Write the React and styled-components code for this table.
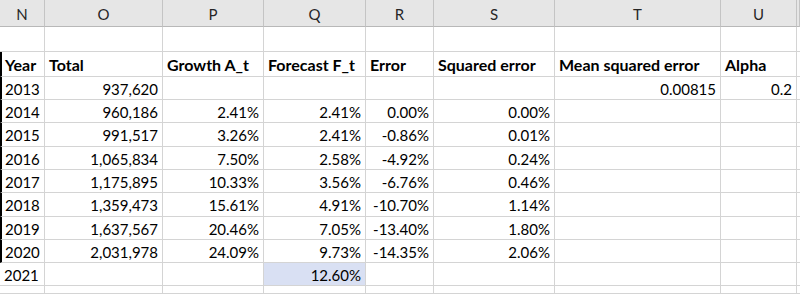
import React from "react";
import styled, { createGlobalStyle } from "styled-components";

const GlobalStyle = createGlobalStyle`
  html, body {
    margin: 0;
    padding: 0;
    background: #ffffff;
  }
  body {
    font-family: "Lato", "Open Sans", "Liberation Sans", sans-serif;
    -webkit-font-smoothing: antialiased;
  }
`;

const COLUMNS = ["N", "O", "P", "Q", "R", "S", "T", "U", ""];
const WIDTHS = [45, 118, 101, 102, 68, 121, 166, 76, 3];
const ROW_HEIGHTS = [25, 25, 23, 23, 24, 23, 23, 24, 23, 23, 23, 8];

const Sheet = styled.div`
  display: grid;
  grid-template-columns: ${WIDTHS.map((w) => `${w}px`).join(" ")};
  grid-template-rows: 27px ${ROW_HEIGHTS.map((h) => `${h}px`).join(" ")};
  width: 800px;
  height: 294px;
  overflow: hidden;
  background: #ffffff;
`;

const ColHead = styled.div`
  box-sizing: border-box;
  display: flex;
  align-items: center;
  justify-content: center;
  background: #e6e6e6;
  border-right: 1px solid #c4c4c4;
  border-bottom: 1px solid #b8b8b8;
  color: #262626;
  font-size: 15px;
  padding-top: 1px;
`;

const Cell = styled.div`
  box-sizing: border-box;
  display: flex;
  align-items: center;
  justify-content: ${(p) => (p.$align === "right" ? "flex-end" : "flex-start")};
  padding: 1px 4px 0 ${(p) => (p.$edge ? "3px" : "4px")};
  border-right: 1px solid #d4d4d4;
  border-bottom: 1px solid #d4d4d4;
  background: ${(p) => (p.$fill ? "#d9e0f3" : "transparent")};
  border-left: ${(p) => (p.$edge ? "2px solid #000000" : "none")};
  color: #000000;
  font-size: ${(p) => (p.$bold ? "16px" : "15px")};
  font-weight: ${(p) => (p.$bold ? 700 : 400)};
  white-space: nowrap;
  overflow: hidden;
`;

const headers = [
  "Year",
  "Total",
  "Growth A_t",
  "Forecast F_t",
  "Error",
  "Squared error",
  "Mean squared error",
  "Alpha",
  "",
];

const data = [
  ["2013", "937,620", "", "", "", "", "0.00815", "0.2"],
  ["2014", "960,186", "2.41%", "2.41%", "0.00%", "0.00%", "", ""],
  ["2015", "991,517", "3.26%", "2.41%", "-0.86%", "0.01%", "", ""],
  ["2016", "1,065,834", "7.50%", "2.58%", "-4.92%", "0.24%", "", ""],
  ["2017", "1,175,895", "10.33%", "3.56%", "-6.76%", "0.46%", "", ""],
  ["2018", "1,359,473", "15.61%", "4.91%", "-10.70%", "1.14%", "", ""],
  ["2019", "1,637,567", "20.46%", "7.05%", "-13.40%", "1.80%", "", ""],
  ["2020", "2,031,978", "24.09%", "9.73%", "-14.35%", "2.06%", "", ""],
  ["2021", "", "", "12.60%", "", "", "", ""],
];

const EmptyRow = ({ prefix }) =>
  COLUMNS.map((c, i) => <Cell key={`${prefix}-${i}`} />);

const App = () => {
  return (
    <>
      <GlobalStyle />
      <Sheet>
        {COLUMNS.map((c, i) => (
          <ColHead key={`h-${i}`}>{c}</ColHead>
        ))}

        <EmptyRow prefix="blank" />

        {headers.map((h, i) => (
          <Cell key={`t-${i}`} $bold $edge={i === 0}>
            {h}
          </Cell>
        ))}

        {data.map((row, r) => (
          <React.Fragment key={row[0]}>
            {row.map((v, i) => (
              <Cell
                key={i}
                $align={i === 0 ? "left" : "right"}
                $edge={i === 0 && row[0] !== "2021"}
                $fill={row[0] === "2021" && i === 3}
              >
                {v}
              </Cell>
            ))}
            <Cell />
          </React.Fragment>
        ))}

        <EmptyRow prefix="tail" />
      </Sheet>
    </>
  );
};

export default App;
